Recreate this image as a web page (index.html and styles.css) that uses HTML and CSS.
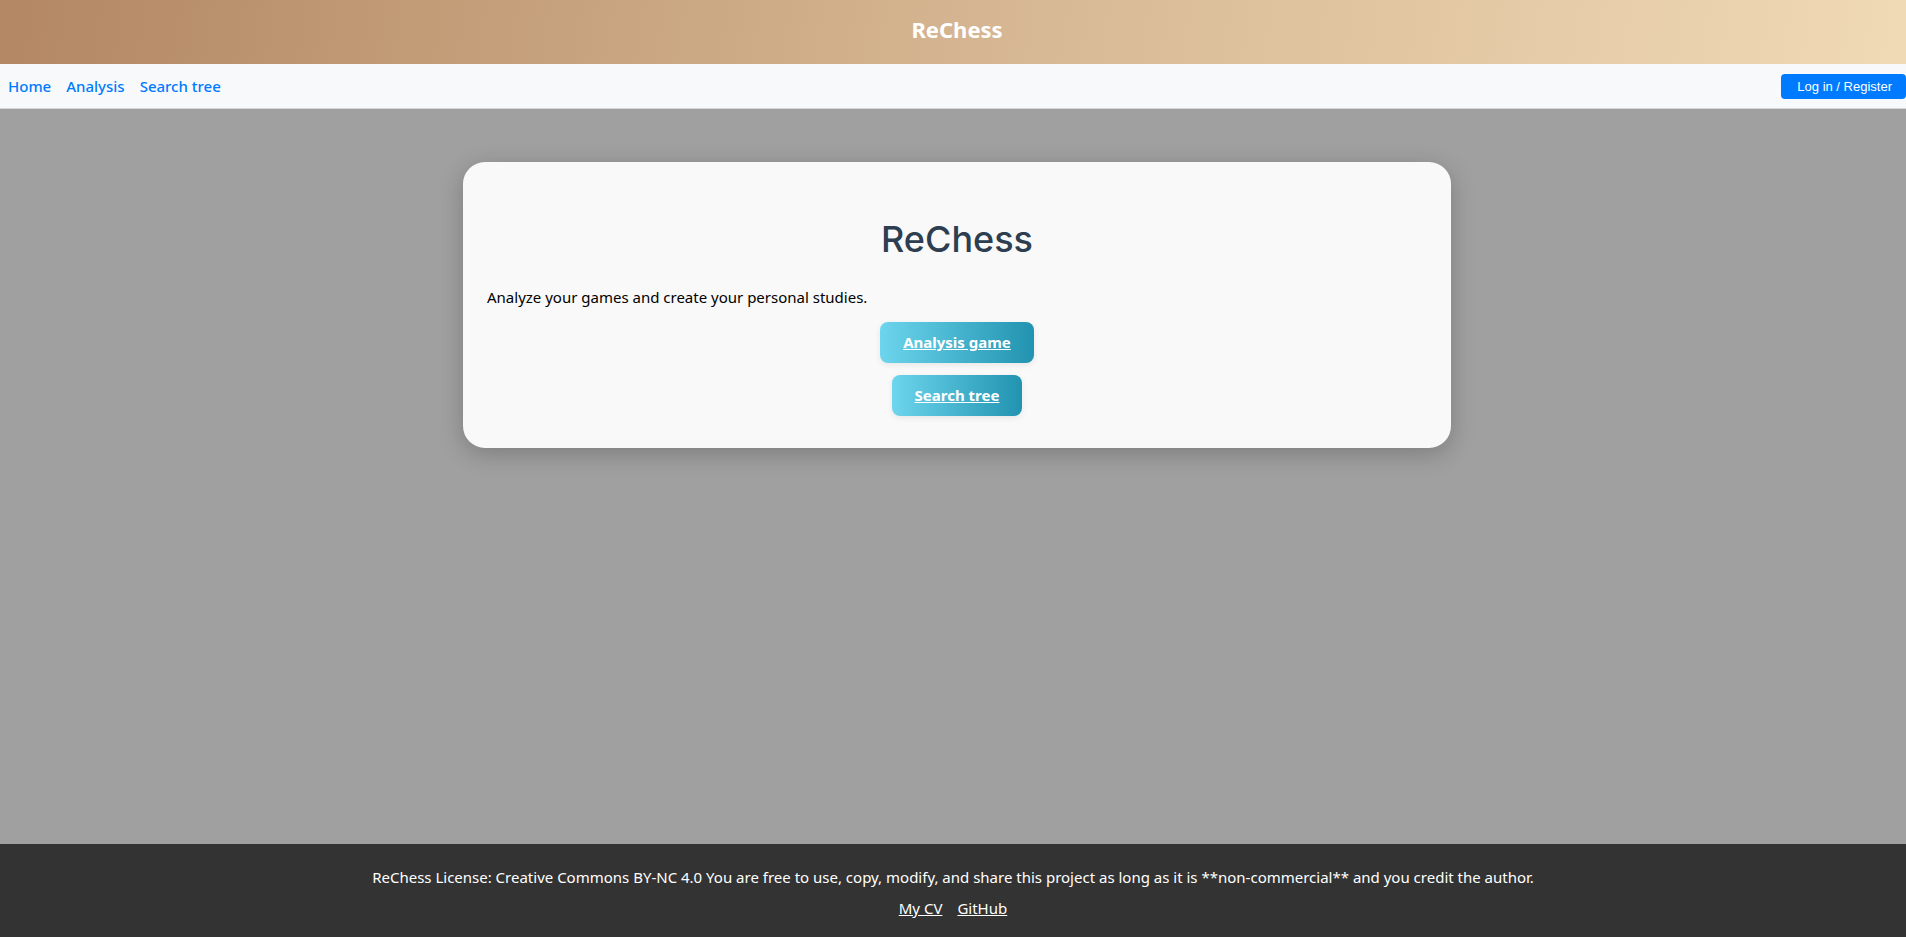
FILE: index.html
```html
<!DOCTYPE html>
<html lang="en">
<head>
<meta charset="utf-8">
<title>ReChess</title>
<link rel="stylesheet" href="styles.css">
</head>
<body>
<header class="top-header">
  <div class="brand">ReChess</div>
</header>
<nav class="navbar">
  <div class="nav-links">
    <a href="#" class="nav-link">Home</a>
    <a href="#" class="nav-link">Analysis</a>
    <a href="#" class="nav-link">Search tree</a>
  </div>
  <a href="#" class="login-btn">Log in / Register</a>
</nav>
<main class="main">
  <section class="card">
    <h1 class="card-title">ReChess</h1>
    <p class="card-text">Analyze your games and create your personal studies.</p>
    <div class="actions">
      <a href="#" class="action-btn">Analysis game</a>
      <a href="#" class="action-btn">Search tree</a>
    </div>
  </section>
</main>
<footer class="footer">
  <p class="license">ReChess License: Creative Commons BY-NC 4.0 You are free to use, copy, modify, and share this project as long as it is **non-commercial** and you credit the author.</p>
  <div class="footer-links">
    <a href="#" class="footer-link">My CV</a>
    <a href="#" class="footer-link">GitHub</a>
  </div>
</footer>
</body>
</html>
```

FILE: styles.css
```css
* { box-sizing: border-box; }
html, body { margin: 0; padding: 0; }
body {
  font-family: "Noto Sans", "Open Sans", sans-serif;
  min-height: 100vh;
  display: flex;
  flex-direction: column;
  background: #a0a0a0;
  color: #000;
}
.top-header {
  height: 64px;
  display: flex;
  align-items: center;
  justify-content: center;
  padding-bottom: 7px;
  background: linear-gradient(100deg, #b38763 0%, #d8b995 55%, #f0d9b5 100%);
}
.brand {
  color: #fff;
  font-weight: 700;
  font-size: 22px;
  line-height: 1;
  margin-left: 8px;
}
.navbar {
  height: 45px;
  background: #f8f9fa;
  border-bottom: 1px solid #d6d6d6;
  display: flex;
  align-items: center;
  justify-content: space-between;
  padding-left: 8px;
}
.nav-links { display: flex; gap: 15px; }
.nav-link {
  color: #007bff;
  text-decoration: none;
  font-size: 15px;
  font-weight: 500;
}
.login-btn {
  background: #007bff;
  color: #fff;
  text-decoration: none;
  font-family: "Liberation Sans", Arial, sans-serif;
  font-size: 13px;
  line-height: 17px;
  padding: 4px 14px 4px 16px;
  border-radius: 4px;
}
.main {
  flex: 1;
  padding: 53px 0 0 8px;
}
.card {
  width: 988px;
  margin: 0 auto;
  background: #f9f9f9;
  border-radius: 22px;
  box-shadow: 0 6px 24px rgba(0, 0, 0, 0.22);
  padding: 24px 24px 32px;
}
.card-title {
  font-family: Inter, "Noto Sans", sans-serif;
  font-weight: 500;
  font-size: 36px;
  color: #2c3e50;
  text-align: center;
  margin: 31px 0 24px;
  line-height: 44px;
}
.card-text {
  font-size: 15px;
  line-height: 24px;
  margin: 0 0 13px;
}
.actions {
  display: flex;
  flex-direction: column;
  align-items: center;
  gap: 12px;
}
.action-btn {
  display: inline-block;
  background: linear-gradient(to right, #6dd5ed, #2193b0);
  color: #fff;
  font-weight: 700;
  font-size: 15px;
  line-height: 21px;
  padding: 10px 23px;
  border-radius: 8px;
  text-decoration: underline;
  box-shadow: 0 2px 6px rgba(0, 0, 0, 0.08);
}
.footer {
  background: #333;
  color: #fff;
  text-align: center;
  padding: 21px 0 17px;
  height: 93px;
}
.license {
  margin: 0;
  font-size: 15px;
  line-height: 24px;
}
.footer-links {
  margin-top: 7px;
  display: flex;
  justify-content: center;
  gap: 15px;
  font-size: 15px;
  line-height: 24px;
}
.footer-link { color: #fff; text-decoration: underline; }
```
